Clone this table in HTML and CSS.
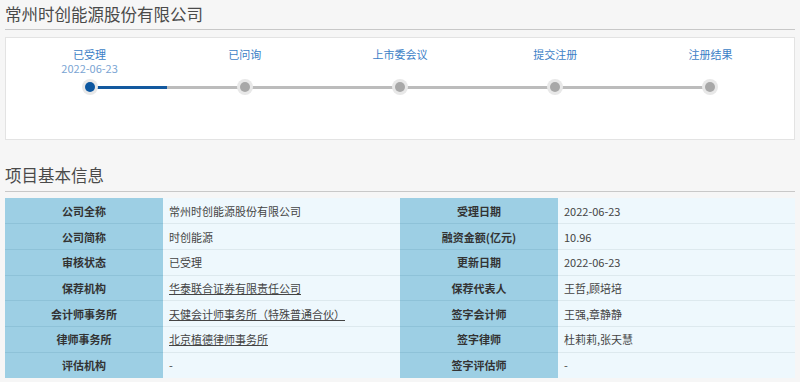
FILE: index.html
```html
<!DOCTYPE html>
<html lang="zh-CN">
<head>
    <meta charset="UTF-8">
    <meta name="viewport" content="width=device-width, initial-scale=1.0">
    <title>常州时创能源股份有限公司 - 项目信息</title>
    <link rel="stylesheet" href="styles.css">
</head>
<body>
    <div class="page">
        <h1 class="page-title">常州时创能源股份有限公司</h1>

        <div class="progress-box">
            <ul class="steps">
                <li class="step done">
                    <span class="step-name">已受理</span>
                    <span class="step-date">2022-06-23</span>
                    <span class="dot"></span>
                </li>
                <li class="step">
                    <span class="step-name">已问询</span>
                    <span class="step-date"></span>
                    <span class="dot"></span>
                </li>
                <li class="step">
                    <span class="step-name">上市委会议</span>
                    <span class="step-date"></span>
                    <span class="dot"></span>
                </li>
                <li class="step">
                    <span class="step-name">提交注册</span>
                    <span class="step-date"></span>
                    <span class="dot"></span>
                </li>
                <li class="step">
                    <span class="step-name">注册结果</span>
                    <span class="step-date"></span>
                    <span class="dot"></span>
                </li>
            </ul>
        </div>

        <h2 class="section-title">项目基本信息</h2>

        <table class="info-table">
            <tr>
                <th>公司全称</th>
                <td>常州时创能源股份有限公司</td>
                <th>受理日期</th>
                <td>2022-06-23</td>
            </tr>
            <tr>
                <th>公司简称</th>
                <td>时创能源</td>
                <th>融资金额(亿元)</th>
                <td>10.96</td>
            </tr>
            <tr>
                <th>审核状态</th>
                <td>已受理</td>
                <th>更新日期</th>
                <td>2022-06-23</td>
            </tr>
            <tr>
                <th>保荐机构</th>
                <td><a href="#">华泰联合证券有限责任公司</a></td>
                <th>保荐代表人</th>
                <td>王哲,顾培培</td>
            </tr>
            <tr>
                <th>会计师事务所</th>
                <td><a href="#">天健会计师事务所（特殊普通合伙）</a></td>
                <th>签字会计师</th>
                <td>王强,章静静</td>
            </tr>
            <tr>
                <th>律师事务所</th>
                <td><a href="#">北京植德律师事务所</a></td>
                <th>签字律师</th>
                <td>杜莉莉,张天慧</td>
            </tr>
            <tr>
                <th>评估机构</th>
                <td>-</td>
                <th>签字评估师</th>
                <td>-</td>
            </tr>
        </table>
    </div>
</body>
</html>
```

FILE: styles.css
```css
* {
    box-sizing: border-box;
    margin: 0;
    padding: 0;
}

body {
    font-family: "Noto Sans CJK SC", "Noto Sans", sans-serif;
    background: #f6f6f6;
    color: #333;
}

.page {
    padding: 0 5px;
}

.page-title,
.section-title {
    font-size: 16.5px;
    font-weight: normal;
    line-height: 22px;
    color: #4a4a4a;
    border-bottom: 1px solid #c8c8c8;
}

.page-title {
    padding: 3px 0 4px;
}

/* progress */
.progress-box {
    margin-top: 7px;
    height: 103px;
    background: #fff;
    border: 1px solid #e3e3e3;
    padding: 0 6px;
}

.steps {
    list-style: none;
    display: flex;
    position: relative;
    padding-top: 9px;
}

.steps::before,
.steps::after {
    content: '';
    position: absolute;
    top: 48px;
    height: 3px;
}

.steps::before {
    left: 10%;
    right: 10%;
    background: #bcbcbc;
}

.steps::after {
    left: 10%;
    width: 10%;
    background: #13599f;
}

.step {
    flex: 1;
    display: flex;
    flex-direction: column;
    align-items: center;
    font-size: 11px;
    line-height: 14px;
}

.step-name {
    color: #3b7ec6;
}

.step-date {
    height: 14px;
    color: #7aa4d3;
}

.dot {
    position: relative;
    z-index: 1;
    margin-top: 4px;
    width: 16px;
    height: 16px;
    border-radius: 50%;
    background: #e8e8e8;
    display: flex;
    align-items: center;
    justify-content: center;
}

.dot::after {
    content: '';
    width: 10px;
    height: 10px;
    border-radius: 50%;
    background: #a8a8a8;
}

.step.done .dot::after {
    background: #0d57a0;
}

/* info table */
.section-title {
    margin-top: 24px;
    padding-bottom: 5px;
}

.info-table {
    width: 100%;
    margin-top: 6px;
    border-collapse: collapse;
    font-size: 11px;
}

.info-table th,
.info-table td {
    height: 25.7px;
    padding: 0 6px;
}

.info-table th {
    width: 20%;
    background: #9dcfe4;
    border-top: 1px solid #8ec2d8;
    color: #333;
    font-weight: bold;
    text-align: center;
}

.info-table td {
    width: 30%;
    background: #eef8fd;
    border-top: 1px solid #dde9ee;
    color: #444;
    text-align: left;
}

.info-table tr:first-child th,
.info-table tr:first-child td {
    border-top: none;
}

.info-table a {
    color: #444;
    text-decoration: underline;
}
```
